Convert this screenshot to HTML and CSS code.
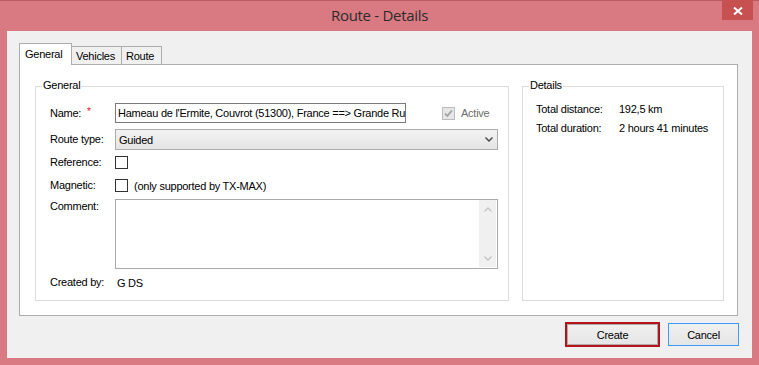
FILE: index.html
```html
<!DOCTYPE html>
<html>
<head>
<meta charset="utf-8">
<link rel="stylesheet" href="styles.css">
</head>
<body>
<div class="window">
  <div class="titlebar">
    <div class="tb-side"></div>
    <div class="title">Route - Details</div>
    <div class="tb-side tb-right">
      <div class="close">
        <svg width="10" height="8" viewBox="0 0 10 8"><path d="M1 0.5 L9 7.5 M9 0.5 L1 7.5" stroke="#fff" stroke-width="2" fill="none"/></svg>
      </div>
    </div>
  </div>
  <div class="client">
    <div class="tabs">
      <div class="tab active">General</div>
      <div class="tab">Vehicles</div>
      <div class="tab">Route</div>
    </div>
    <div class="panel">
      <div class="group general">
        <span class="legend">General</span>
        <div class="row r-name">
          <span class="label">Name: <span class="req">*</span></span>
          <div class="input">Hameau de l'Ermite, Couvrot (51300), France ==&gt; Grande Ru</div>
          <div class="active-wrap">
            <span class="chk disabled">
              <svg width="11" height="11" viewBox="0 0 11 11"><path d="M2 5.5 L4.3 8 L9 2.5" stroke="#a0a0a0" stroke-width="1.8" fill="none"/></svg>
            </span>
            <span class="active-txt">Active</span>
          </div>
        </div>
        <div class="row r-type">
          <span class="label">Route type:</span>
          <div class="select">
            <span>Guided</span>
            <svg width="8" height="5" viewBox="0 0 8 5"><path d="M0.5 0.5 L4 4 L7.5 0.5" stroke="#444" stroke-width="1.4" fill="none"/></svg>
          </div>
        </div>
        <div class="row r-ref">
          <span class="label">Reference:</span>
          <span class="chk"></span>
        </div>
        <div class="row r-mag">
          <span class="label">Magnetic:</span>
          <span class="chk"></span>
          <span class="note">(only supported by TX-MAX)</span>
        </div>
        <div class="row r-comment">
          <span class="label top">Comment:</span>
          <div class="textarea">
            <div class="ta-body"></div>
            <div class="scroll">
              <svg width="8" height="5" viewBox="0 0 8 5"><path d="M0.5 4.5 L4 1 L7.5 4.5" stroke="#c4c4c4" stroke-width="1.4" fill="none"/></svg>
              <svg width="8" height="5" viewBox="0 0 8 5"><path d="M0.5 0.5 L4 4 L7.5 0.5" stroke="#c4c4c4" stroke-width="1.4" fill="none"/></svg>
            </div>
          </div>
        </div>
        <div class="row r-created">
          <span class="label">Created by:</span>
          <span class="value">G DS</span>
        </div>
      </div>
      <div class="group details">
        <span class="legend">Details</span>
        <div class="drow"><span class="dlabel">Total distance:</span><span>192,5 km</span></div>
        <div class="drow"><span class="dlabel">Total duration:</span><span>2 hours 41 minutes</span></div>
      </div>
    </div>
    <div class="buttons">
      <div class="btn create">Create</div>
      <div class="btn cancel">Cancel</div>
    </div>
  </div>
</div>
</body>
</html>
```

FILE: styles.css
```css
* { box-sizing: border-box; }
html, body { margin: 0; padding: 0; }
body {
  width: 759px;
  height: 365px;
  overflow: hidden;
  background: #d97a82;
  font-family: "Liberation Sans", Arial, sans-serif;
  font-size: 11px;
  letter-spacing: -0.25px;
  color: #000;
}
.window {
  width: 759px;
  height: 365px;
  background: #d97a82;
  border-top: 1px solid #b95a64;
  display: flex;
  flex-direction: column;
}
.titlebar {
  height: 30px;
  display: grid;
  grid-template-columns: 1fr auto 1fr;
}
.title {
  font-family: "Open Sans", "Noto Sans", sans-serif;
  font-size: 15px;
  line-height: 20px;
  padding-top: 4px;
  color: #2b2b2b;
  letter-spacing: -0.3px;
}
.tb-right { display: flex; justify-content: flex-end; align-items: flex-start; padding-right: 6px; }
.close {
  width: 31px;
  height: 20px;
  margin-top: -1px;
  background: #c75050;
  display: flex;
  align-items: center;
  justify-content: center;
  padding-top: 1px;
}
.client {
  flex: 1;
  margin: 0 7px 7px 7px;
  background: #f0f0f0;
  padding: 12px 14px 0 12px;
  display: flex;
  flex-direction: column;
}
.tabs {
  height: 21px;
  display: flex;
  align-items: flex-end;
  position: relative;
  z-index: 1;
}
.tab {
  height: 18px;
  border: 1px solid #adadad;
  border-bottom: none;
  background: #f0f0f0;
  padding: 2px 4px 0 4px;
  line-height: 14px;
  margin-left: -1px;
}
.tab.active {
  height: 22px;
  margin-bottom: -1px;
  margin-left: 0;
  background: #fff;
  padding: 3px 5px 0 5px;
  width: 53px;
  position: relative;
  z-index: 2;
}
.tab:nth-child(2) { width: 51px; }
.tab:nth-child(3) { width: 41px; }
.panel {
  height: 252px;
  border: 1px solid #adadad;
  background: #fff;
  display: flex;
  gap: 13px;
  padding: 21px 13px 0 15px;
}
.group {
  position: relative;
  height: 215px;
  border: 1px solid #dcdcdc;
}
.legend {
  position: absolute;
  top: -8px;
  left: 6px;
  background: #fff;
  padding: 0 1px;
  line-height: 13px;
}
.general {
  width: 474px;
  display: flex;
  flex-direction: column;
  padding: 16px 10px 0 14px;
}
.details {
  width: 202px;
  padding: 16px 0 0 13px;
}
.row { display: flex; align-items: center; }
.label { width: 65px; flex: none; line-height: 13px; }
.label.top { align-self: flex-start; margin-top: 1px; }
.req { color: #e81123; position: relative; top: -2px; margin-left: 3px; font-size: 10px; }
.r-name { height: 20px; }
.input {
  width: 291px;
  height: 20px;
  border: 1px solid #7a7a7a;
  padding: 2px 0 0 2px;
  white-space: nowrap;
  overflow: hidden;
  line-height: 14px;
}
.active-wrap { display: flex; align-items: center; margin-left: 36px; }
.active-txt { color: #6d6d6d; margin-left: 6px; }
.chk {
  width: 13px;
  height: 13px;
  border: 1px solid #333;
  background: #fff;
  flex: none;
  display: flex;
  align-items: center;
  justify-content: center;
}
.chk.disabled { border-color: #bcbcbc; background: #e6e6e6; }
.r-type { height: 21px; margin-top: 6px; }
.select {
  flex: 1;
  height: 21px;
  border: 1px solid #acacac;
  background: linear-gradient(#f2f2f2, #e5e5e5);
  display: flex;
  align-items: center;
  justify-content: space-between;
  padding: 0 4px 0 3px;
}
.r-ref { height: 13px; margin-top: 6px; }
.r-mag { height: 13px; margin-top: 10px; }
.note { margin-left: 6px; }
.r-comment { height: 70px; margin-top: 7px; align-items: stretch; }
.textarea {
  flex: 1;
  border: 1px solid #a9a9a9;
  display: flex;
  padding: 0 1px 1px 0;
}
.ta-body { flex: 1; }
.scroll {
  width: 17px;
  background: #f0f0f0;
  display: flex;
  flex-direction: column;
  justify-content: space-between;
  align-items: center;
  padding: 7px 0 6px 0;
}
.r-created { height: 13px; margin-top: 7px; }
.value { margin-left: 2px; }
.drow { display: flex; line-height: 13px; height: 19px; }
.dlabel { width: 83px; flex: none; }
.buttons {
  display: flex;
  justify-content: flex-end;
  align-items: flex-start;
  gap: 8px;
  margin-top: 6px;
  padding-right: 0;
  margin-right: -1px;
}
.btn {
  display: flex;
  align-items: center;
  justify-content: center;
  background: linear-gradient(#f0f0f0, #e5e5e5);
}
.create {
  width: 95px;
  height: 25px;
  border: 2px solid #b5121b;
  box-shadow: inset 0 0 0 1px #acacac;
}
.cancel {
  width: 71px;
  height: 23px;
  margin-top: 1px;
  border: 1px solid #3c9cfc;
}
```
